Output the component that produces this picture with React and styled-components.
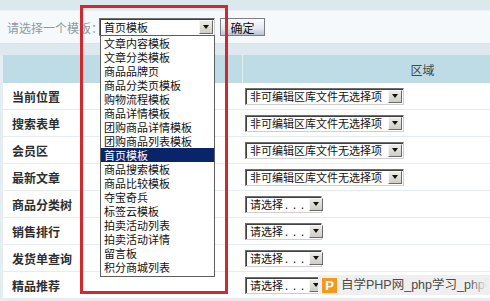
import React from "react";
import styled, { createGlobalStyle } from "styled-components";

const Global = createGlobalStyle`
  html, body { margin: 0; padding: 0; background: #ffffff; }
  body { font-family: "Noto Sans CJK SC", "Noto Sans", sans-serif; }
  * { box-sizing: border-box; }
`;

const Page = styled.div`
  position: relative;
  width: 490px;
  height: 301px;
  overflow: hidden;
  background: #e4eef2;
`;

const TopStrip = styled.div`
  height: 10px;
  background: #dbe8ed;
`;

const Toolbar = styled.div`
  height: 34px;
  display: flex;
  align-items: center;
  padding-left: 7px;
  background: #f5f9fb;
  border-top: 1px solid #e9f1f4;
  border-bottom: 1px solid #d6e4ea;
`;

const ToolLabel = styled.span`
  width: 92px;
  font-size: 12px;
  color: #8c9ba1;
  white-space: nowrap;
`;

const Gap = styled.div`
  height: 11px;
  background: #dde9ee;
`;

const Table = styled.div`
  margin-left: 3px;
  width: 599px;
`;

const HeaderRow = styled.div`
  display: grid;
  grid-template-columns: 239px 360px;
  height: 28px;
  background: #bddce5;
`;

const HeaderCell = styled.div`
  display: flex;
  align-items: center;
  justify-content: center;
  font-size: 12px;
  color: #3a4a50;
  border-left: ${(p) => (p.$divider ? "1px solid #e2f0f4" : "none")};
`;

const Row = styled.div`
  display: grid;
  grid-template-columns: 239px 360px;
  height: 27px;
  background: #ffffff;
  border-bottom: 1px solid #e4ecef;
`;

const LabelCell = styled.div`
  display: flex;
  align-items: center;
  padding-left: 9px;
  font-size: 12px;
  font-weight: 700;
  color: #2e2e2e;
`;

const ValueCell = styled.div`
  display: flex;
  align-items: center;
  padding-left: 3px;
`;

const SelectBox = styled.div`
  display: flex;
  align-items: center;
  justify-content: space-between;
  width: ${(p) => p.$w}px;
  height: ${(p) => p.$h || 17}px;
  background: #ffffff;
  border-top: 1px solid #6f6f6f;
  border-left: 1px solid #6f6f6f;
  border-right: 1px solid #cfcfcf;
  border-bottom: 1px solid #cfcfcf;
  box-shadow: inset 1px 1px 0 #404040;
  padding: 0 1px 0 4px;
  font-size: 11px;
  line-height: 14px;
  color: #111;
  white-space: nowrap;
`;

const Dots = styled.span`
  letter-spacing: 5px;
  margin-left: 2px;
`;

const ArrowBtn = styled.div`
  width: 14px;
  height: ${(p) => p.$h || 13}px;
  background: linear-gradient(#ecebe6, #cfcdc6);
  border-top: 1px solid #f7f7f7;
  border-left: 1px solid #f7f7f7;
  border-right: 1px solid #6b6b6b;
  border-bottom: 1px solid #6b6b6b;
  display: flex;
  align-items: center;
  justify-content: center;
  flex-shrink: 0;
`;

const Tri = styled.div`
  width: 0;
  height: 0;
  border-left: 3.5px solid transparent;
  border-right: 3.5px solid transparent;
  border-top: 4px solid #111;
`;

const Button = styled.div`
  margin-left: 5px;
  width: 45px;
  height: 18px;
  display: flex;
  align-items: center;
  justify-content: center;
  font-size: 12px;
  color: #111;
  background: linear-gradient(#fbfbfd, #e4e8f0 60%, #b9c1d3);
  border: 1px solid #7d7d86;
`;

const DropList = styled.div`
  position: absolute;
  left: 100px;
  top: 35px;
  width: 115px;
  height: 242px;
  background: #ffffff;
  border: 1px solid #5e5e5e;
`;

const DropItem = styled.div`
  height: 14px;
  line-height: 14px;
  font-size: 11px;
  padding-left: 3px;
  white-space: nowrap;
  overflow: hidden;
  color: ${(p) => (p.$active ? "#ffffff" : "#111")};
  background: ${(p) => (p.$active ? "#0a246a" : "transparent")};
`;

const RedFrame = styled.div`
  position: absolute;
  left: 80px;
  top: 5px;
  width: 148px;
  height: 289px;
  border: 3px solid #cf2a30;
  pointer-events: none;
`;

const Watermark = styled.div`
  position: absolute;
  left: 318px;
  top: 275px;
  width: 172px;
  height: 20px;
  background: #efefef;
  display: flex;
  align-items: center;
  padding-left: 4px;
  overflow: hidden;
  &::after {
    content: "";
    position: absolute;
    right: 0;
    top: 0;
    width: 22px;
    height: 100%;
    background: linear-gradient(to right, rgba(239,239,239,0), #efefef 90%);
  }
`;

const Logo = styled.div`
  width: 15px;
  height: 15px;
  background: #f39a1e;
  color: #fff;
  font-family: "Liberation Sans", Arial, sans-serif;
  font-weight: 700;
  font-size: 13px;
  line-height: 15px;
  text-align: center;
  flex-shrink: 0;
`;

const WmText = styled.span`
  margin-left: 4px;
  font-size: 12.5px;
  line-height: 16px;
  color: #4a4a4a;
  font-family: "Liberation Sans", "Noto Sans CJK SC", sans-serif;
  white-space: nowrap;
`;

function FakeSelect({ w, h, children, arrowH }) {
  return (
    <SelectBox $w={w} $h={h}>
      <span>{children}</span>
      <ArrowBtn $h={arrowH}>
        <Tri />
      </ArrowBtn>
    </SelectBox>
  );
}

const templates = [
  "文章内容模板",
  "文章分类模板",
  "商品品牌页",
  "商品分类页模板",
  "购物流程模板",
  "商品详情模板",
  "团购商品详情模板",
  "团购商品列表模板",
  "首页模板",
  "商品搜索模板",
  "商品比较模板",
  "夺宝奇兵",
  "标签云模板",
  "拍卖活动列表",
  "拍卖活动详情",
  "留言板",
  "积分商城列表",
];

const rows = [
  { label: "当前位置", full: true },
  { label: "搜索表单", full: true },
  { label: "会员区", full: true },
  { label: "最新文章", full: true },
  { label: "商品分类树", full: false },
  { label: "销售排行", full: false },
  { label: "发货单查询", full: false },
  { label: "精品推荐", full: false },
];

export default function App() {
  return (
    <>
      <Global />
      <Page>
        <TopStrip />
        <Toolbar>
          <ToolLabel>请选择一个模板：</ToolLabel>
          <FakeSelect w={116} h={18} arrowH={14}>
            首页模板
          </FakeSelect>
          <Button>确定</Button>
        </Toolbar>
        <Gap />
        <Table>
          <HeaderRow>
            <HeaderCell />
            <HeaderCell $divider>区域</HeaderCell>
          </HeaderRow>
          {rows.map((r) => (
            <Row key={r.label}>
              <LabelCell>{r.label}</LabelCell>
              <ValueCell>
                {r.full ? (
                  <FakeSelect w={159}>非可编辑区库文件无选择项</FakeSelect>
                ) : (
                  <FakeSelect w={77}>
                    请选择<Dots>...</Dots>
                  </FakeSelect>
                )}
              </ValueCell>
            </Row>
          ))}
        </Table>
        <DropList>
          {templates.map((t) => (
            <DropItem key={t} $active={t === "首页模板"}>
              {t}
            </DropItem>
          ))}
        </DropList>
        <RedFrame />
        <Watermark>
          <Logo>P</Logo>
          <WmText>自学PHP网_php学习_php教</WmText>
        </Watermark>
      </Page>
    </>
  );
}
